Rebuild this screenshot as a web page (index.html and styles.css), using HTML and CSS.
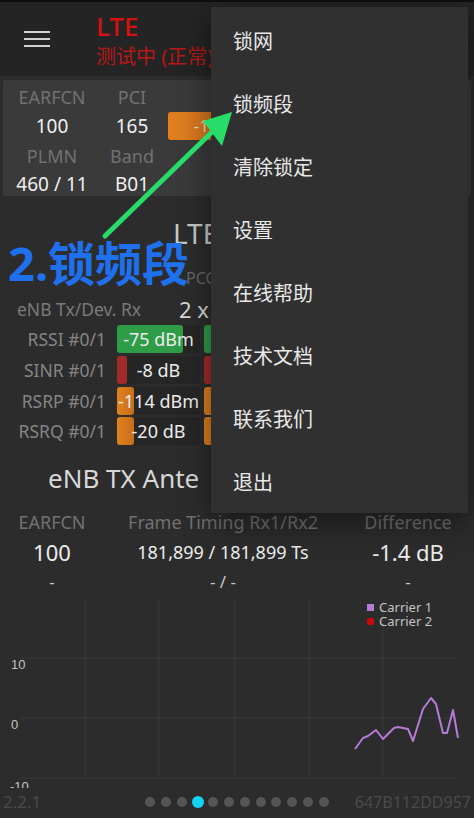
FILE: index.html
```html
<!DOCTYPE html>
<html lang="zh">
<head>
<meta charset="utf-8">
<link rel="stylesheet" href="styles.css">
</head>
<body>
<div class="screen">
  <header class="appbar">
    <div class="burger"><span></span><span></span><span></span></div>
    <div class="titles">
      <div class="t1">LTE</div>
      <div class="t2">测试中 (正常)</div>
    </div>
  </header>

  <section class="card">
    <div class="lbl">EARFCN</div><div class="lbl">PCI</div><div class="lbl"></div>
    <div class="val">100</div><div class="val">165</div><div class="val"><span class="obox">-114</span></div>
    <div class="lbl">PLMN</div><div class="lbl">Band</div><div class="lbl"></div>
    <div class="val">460 / 11</div><div class="val">B01</div><div class="val"></div>
  </section>

  <div class="sect-title">LTE</div>

  <div class="trow"><span class="pcc">PCC</span></div>
  <div class="trow"><span class="enb">eNB Tx/Dev. Rx</span><span class="twox">2 x</span></div>
  <div class="trow">
    <span class="rlab">RSSI #0/1</span>
    <div class="bar"><div class="fill green" style="width:80%"></div><span class="btxt">-75 dBm</span></div>
    <div class="bar"><div class="fill green" style="width:80%"></div></div>
  </div>
  <div class="trow">
    <span class="rlab">SINR #0/1</span>
    <div class="bar"><div class="fill red" style="width:12%"></div><span class="btxt">-8 dB</span></div>
    <div class="bar"><div class="fill red" style="width:12%"></div></div>
  </div>
  <div class="trow">
    <span class="rlab">RSRP #0/1</span>
    <div class="bar"><div class="fill orange" style="width:21%"></div><span class="btxt">-114 dBm</span></div>
    <div class="bar"><div class="fill orange" style="width:21%"></div></div>
  </div>
  <div class="trow">
    <span class="rlab">RSRQ #0/1</span>
    <div class="bar"><div class="fill orange" style="width:21%"></div><span class="btxt">-20 dB</span></div>
    <div class="bar"><div class="fill orange" style="width:21%"></div></div>
  </div>

  <div class="sect-title2">eNB TX Ante</div>

  <section class="difftable">
    <div class="dl">EARFCN</div><div class="dl">Frame Timing Rx1/Rx2</div><div class="dl">Difference</div>
    <div class="dv big">100</div><div class="dv">181,899 / 181,899 Ts</div><div class="dv big">-1.4 dB</div>
    <div class="dd">-</div><div class="dd">- / -</div><div class="dd">-</div>
  </section>

  <svg class="chart" width="474" height="190" viewBox="0 0 474 190">
    <g stroke="#393939" stroke-width="1">
      <line x1="85" y1="3" x2="85" y2="180"/>
      <line x1="159" y1="3" x2="159" y2="180"/>
      <line x1="235" y1="3" x2="235" y2="180"/>
      <line x1="309" y1="3" x2="309" y2="180"/>
      <line x1="383" y1="3" x2="383" y2="180"/>
      <line x1="20" y1="60" x2="457" y2="60"/>
      <line x1="20" y1="120" x2="457" y2="120"/>
      <line x1="20" y1="180" x2="457" y2="180"/>
    </g>
    <g class="axis">
      <text x="11" y="71">10</text>
      <text x="11" y="131">0</text>
      <text x="10" y="193">-10</text>
    </g>
    <rect x="367" y="6" width="7" height="7" fill="#b57bd8"/>
    <rect x="367" y="20" width="7" height="7" rx="2" fill="#cc0a0a"/>
    <text class="legend" x="379" y="14">Carrier 1</text>
    <text class="legend" x="379" y="28">Carrier 2</text>
    <polyline fill="none" stroke="#b57bd8" stroke-width="2" stroke-linejoin="round"
      points="355,151 363,140 368,138 376,132 383,141 394,130 398,129 408,131 413,143 423,111 431,100 436,106 443,135 447,135 453,112 458,140"/>
  </svg>

  <footer class="footer">
    <span class="ver">2.2.1</span>
    <div class="dots">
      <i></i><i></i><i></i><i class="on"></i><i></i><i></i><i></i><i></i><i></i><i></i><i></i><i></i>
    </div>
    <span class="sn">647B112DD957</span>
  </footer>

  <nav class="menu">
    <div class="mi">锁网</div>
    <div class="mi">锁频段</div>
    <div class="mi">清除锁定</div>
    <div class="mi">设置</div>
    <div class="mi">在线帮助</div>
    <div class="mi">技术文档</div>
    <div class="mi">联系我们</div>
    <div class="mi">退出</div>
  </nav>

  <svg class="arrow" width="474" height="300" viewBox="0 0 474 300">
    <line x1="105" y1="236" x2="213" y2="131" stroke="#27dc69" stroke-width="5" stroke-linecap="round"/>
    <polygon points="232,112 203,121 222,146" fill="#27dc69"/>
  </svg>
  <div class="annot">2.锁频段</div>
</div>
</body>
</html>
```

FILE: styles.css
```css
* { box-sizing: border-box; }
html, body { margin: 0; padding: 0; }
body {
  background: #2c2c2c;
  font-family: "Noto Sans", "Noto Sans CJK SC", sans-serif;
  width: 474px;
  height: 818px;
  overflow: hidden;
}
.screen { position: relative; width: 474px; height: 818px; overflow: hidden; }

.appbar {
  height: 76px;
  background: #242424;
  border-top: 2px solid #0e0e0e;
  display: flex;
  align-items: flex-start;
}
.burger {
  width: 26px;
  margin: 29px 0 0 24px;
  display: flex;
  flex-direction: column;
  gap: 5px;
}
.burger span { display: block; height: 2px; background: #d2d2d2; }
.titles { margin-left: 46px; white-space: nowrap; }
.t1 {
  margin-top: 9px;
  font-size: 26px;
  line-height: 30px;
  font-weight: 500;
  color: #d41212;
}
.t2 {
  margin-top: 4px;
  font-size: 20px;
  line-height: 24px;
  color: #b81818;
}

.card {
  margin: 4px 3px 0 3px;
  height: 116px;
  background: #3a3a3a;
  border-radius: 3px;
  padding-top: 3px;
  display: grid;
  grid-template-columns: 98px 62px 1fr;
  grid-template-rows: 28px 30px 30px 25px;
  align-items: center;
  text-align: center;
}
.lbl { font-size: 18px; color: #717171; line-height: 20px; }
.val { font-size: 19px; color: #f0f0f0; line-height: 22px; white-space: nowrap; text-align: center; }
.card .val:nth-child(6) { text-align: left; padding-left: 5px; }
.obox {
  display: inline-block;
  width: 86px;
  height: 28px;
  line-height: 28px;
  border-radius: 3px;
  background: linear-gradient(90deg, #e2801f, #c76a18);
  color: #f2d9c0;
  font-size: 17px;
  text-align: center;
}

.sect-title {
  margin-top: 22px;
  padding-left: 173px;
  font-size: 28px;
  line-height: 30px;
  color: #c8c8c8;
  white-space: nowrap;
}

.trow {
  height: 30.6px;
  display: flex;
  align-items: center;
  white-space: nowrap;
}
.sect-title + .trow { margin-top: 15px; }
.pcc { margin-left: 186px; font-size: 16px; color: #676767; }
.enb { margin-left: 17px; width: 162px; font-size: 17.5px; color: #7a7a7a; }
.twox { font-size: 22px; color: #d8d8d8; }
.rlab {
  width: 106px;
  text-align: right;
  font-size: 17.5px;
  color: #858585;
  margin-right: 11px;
}
.bar {
  position: relative;
  width: 83px;
  height: 28px;
  margin-right: 4px;
  background: #262626;
  border-radius: 3px;
  flex: none;
  display: flex;
  align-items: center;
  justify-content: center;
}
.fill { position: absolute; left: 0; top: 0; bottom: 0; border-radius: 3px; }
.fill.green { background: #2f9c47; }
.fill.red { background: #a52a2a; }
.fill.orange { background: linear-gradient(90deg, #e0821f, #c86d1c); }
.btxt { position: relative; font-size: 18px; color: #ececec; }

.sect-title2 {
  margin-top: 16px;
  padding-left: 48px;
  font-size: 26px;
  line-height: 30px;
  color: #d8d8d8;
  white-space: nowrap;
}

.difftable {
  margin-top: 14px;
  display: grid;
  grid-template-columns: 104px 238px 1fr;
  grid-template-rows: 30px 30px 30px;
  align-items: center;
  text-align: center;
  white-space: nowrap;
}
.dl { font-size: 18px; color: #727272; }
.dv { font-size: 18px; color: #ececec; }
.dv.big { font-size: 22px; }
.dd { font-size: 17px; color: #c8c8c8; }

.chart { display: block; margin-top: 1px; }
.axis text { font-family: "Liberation Sans", sans-serif; font-size: 13px; fill: #c4c4c4; }
.legend { font-family: "Noto Sans", sans-serif; font-size: 13px; fill: #c4c4c4; }

.footer {
  height: 28px;
  display: grid;
  grid-template-columns: 1fr auto 1fr;
  align-items: center;
  padding: 0 3px;
}
.ver { font-size: 17px; color: #4a4a4a; }
.sn { font-size: 16px; color: #4a4a4a; text-align: right; }
.dots { display: flex; align-items: center; gap: 5.8px; }
.dots i { display: block; width: 10px; height: 10px; border-radius: 50%; background: #555; }
.dots i.on { width: 12px; height: 12px; margin: 0 -1px; background: #13d3f2; }

.arrow { position: absolute; left: 0; top: 0; pointer-events: none; }
.annot {
  position: absolute;
  left: 8px;
  top: 240px;
  font-size: 47px;
  line-height: 47px;
  font-weight: 700;
  color: #1f70ec;
  white-space: nowrap;
}

.menu {
  position: absolute;
  left: 211px;
  top: 7px;
  width: 257px;
  height: 506px;
  padding-top: 2px;
  background: #303030;
  box-shadow: 0 10px 30px rgba(0, 0, 0, 0.45);
}
.mi {
  height: 63px;
  display: flex;
  align-items: center;
  padding-left: 22px;
  font-family: "Noto Sans CJK SC", sans-serif;
  font-size: 20px;
  color: #e8e8e8;
}
```
